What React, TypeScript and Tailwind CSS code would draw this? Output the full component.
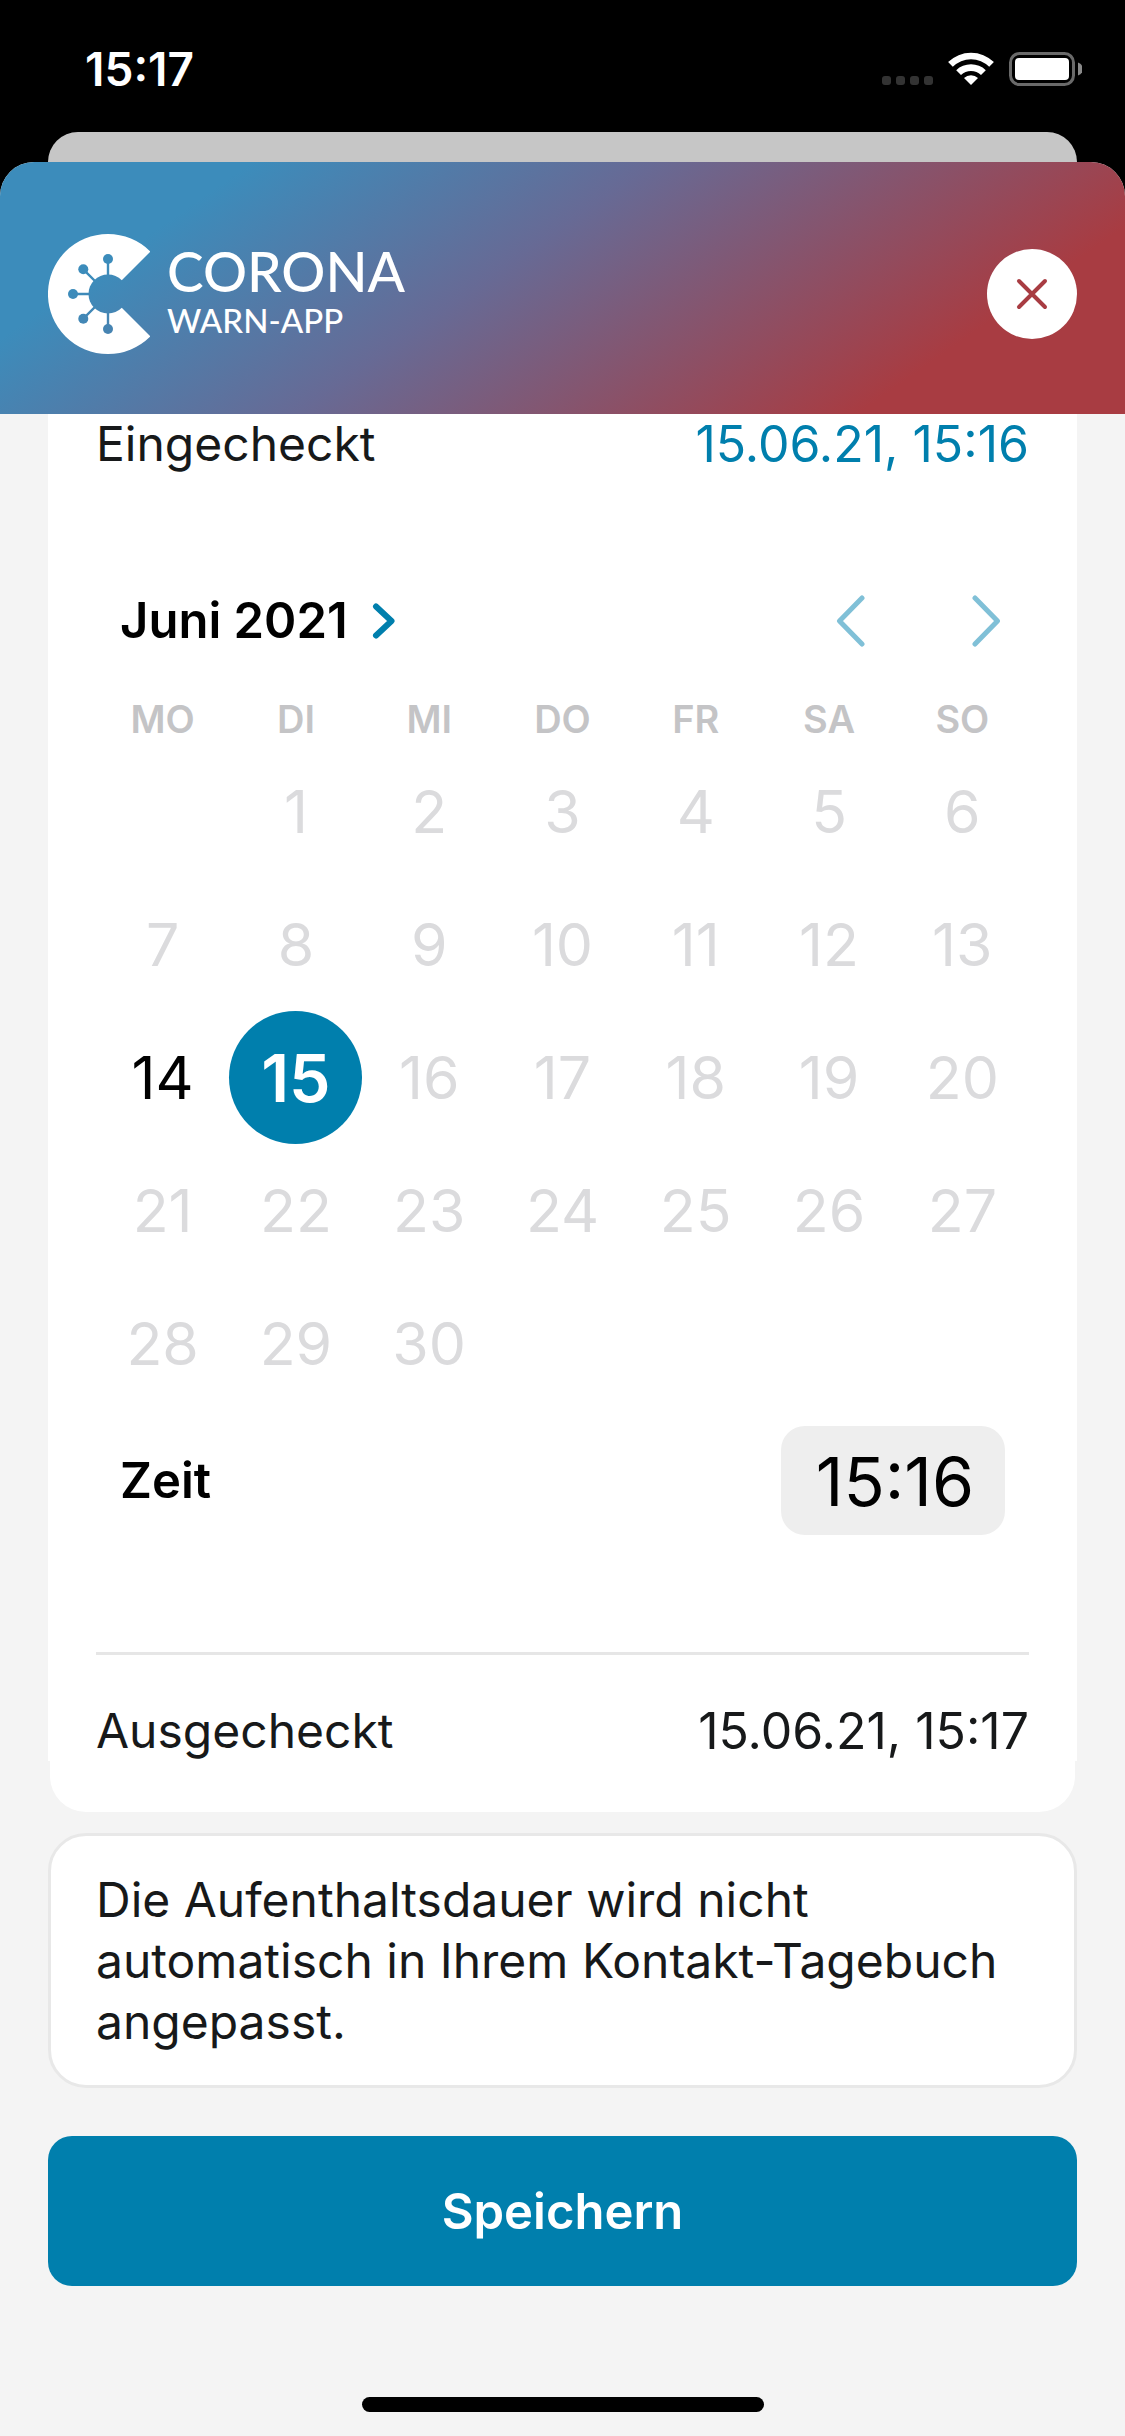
import { useState } from "react";

const WEEKDAYS = ["MO", "DI", "MI", "DO", "FR", "SA", "SO"];
const DAYS = Array.from({ length: 30 }, (_, i) => i + 1);
const ENABLED_DAYS = [14, 15];

function StatusBar() {
  return (
    <div className="flex h-[132px] items-start justify-between pt-[39px] pr-[43px] pl-[85px] text-white">
      <time className="text-[46px] leading-[60px] font-semibold">15:17</time>
      <svg width="200" height="34" viewBox="0 0 200 34" className="mt-[13px]" aria-hidden="true">
        <g fill="#333333">
          <rect x="0" y="24" width="9" height="9" rx="3" />
          <rect x="14" y="24" width="9" height="9" rx="3" />
          <rect x="28" y="24" width="9" height="9" rx="3" />
          <rect x="42" y="24" width="9" height="9" rx="3" />
        </g>
        <g transform="translate(89 33)" fill="white">
          <path d="M0 0L-7 -7A10.5 10.5 0 0 1 7 -7Z" />
          <path d="M-14.8 -14.8A21.5 21.5 0 0 1 14.8 -14.8L10 -10A14.5 14.5 0 0 0 -10 -10Z" />
          <path d="M-22.9 -22.9A32.8 32.8 0 0 1 22.9 -22.9L18.2 -18.2A25.6 25.6 0 0 0 -18.2 -18.2Z" />
        </g>
        <rect x="128.5" y="1.5" width="63" height="31" rx="9" fill="none" stroke="#6a6a6a" strokeWidth="3" />
        <rect x="133" y="6" width="54" height="22" rx="4" fill="white" />
        <path d="M196 10.5A6.8 6.8 0 0 1 196 23.5Z" fill="#8a8a8a" />
      </svg>
    </div>
  );
}

function Logo() {
  return (
    <div className="flex items-center gap-[17px] text-white">
      <svg width="102" height="120" viewBox="0 0 102 120" aria-hidden="true">
        <mask id="virus" maskUnits="userSpaceOnUse" x="0" y="0" width="120" height="120">
          <rect width="120" height="120" fill="white" />
          <circle cx="60" cy="60" r="19.5" fill="black" />
          <g stroke="black" strokeWidth="2.4">
            <path d="M60 60V25M60 60V95M60 60H25M60 60L35.3 35.3M60 60L35.3 84.7" />
          </g>
          <g fill="black">
            <circle cx="60" cy="25" r="5" />
            <circle cx="60" cy="95" r="5" />
            <circle cx="25" cy="60" r="5" />
            <circle cx="35.3" cy="35.3" r="5" />
            <circle cx="35.3" cy="84.7" r="5" />
          </g>
        </mask>
        <path d="M60 60L102.4 17.6A60 60 0 1 0 102.4 102.4Z" fill="white" mask="url(#virus)" />
      </svg>
      <div className="flex flex-col pb-1 font-['Lato','Open_Sans',sans-serif] font-medium">
        <span className="text-[55px] leading-[56px]">CORONA</span>
        <span className="text-[33px] leading-[42px]">WARN-APP</span>
      </div>
    </div>
  );
}

function Chevron({ left = false }: { left?: boolean }) {
  return (
    <svg width="30" height="52" viewBox="0 0 30 52" fill="none" stroke="#80c0d7" strokeWidth="5" strokeLinecap="round" strokeLinejoin="round" aria-hidden="true">
      <path d={left ? "M26 3L3.5 26L26 49" : "M4 3L26.5 26L4 49"} />
    </svg>
  );
}

export default function App() {
  const [day, setDay] = useState(15);
  const [time, setTime] = useState("15:16");

  return (
    <div className="flex min-h-screen flex-col bg-black font-['Inter','Liberation_Sans',sans-serif] text-[48px] leading-[60px] text-[#17191a]">
      <StatusBar />
      <div className="mx-12 h-[30px] rounded-t-[30px] bg-[#c6c6c6]" />

      <div className="flex flex-1 flex-col overflow-hidden rounded-t-[34px] bg-[#f4f4f4]">
        <header className="flex h-[252px] items-center justify-between bg-[linear-gradient(145deg,#3c8cbb_17%,#676a95_44%,#a83c42_82%)] px-12 pt-3">
          <Logo />
          <button type="button" aria-label="Schließen" className="flex size-[90px] items-center justify-center rounded-full bg-white">
            <svg width="32" height="32" viewBox="0 0 32 32" stroke="#a83c42" strokeWidth="4" strokeLinecap="round" aria-hidden="true">
              <path d="M3 3L29 29M29 3L3 29" />
            </svg>
          </button>
        </header>

        <main className="flex flex-1 flex-col px-12">
          <section className="bg-white px-12">
            <div className="flex h-[60px] items-center justify-between">
              <span>Eingecheckt</span>
              <span className="text-[50px] text-[#007fad]">15.06.21, 15:16</span>
            </div>

            <div className="mt-[117px] flex items-center justify-between pr-7 pl-6">
              <button type="button" className="flex items-center gap-6 text-[49px] font-semibold text-black">
                Juni 2021
                <svg width="24" height="36" viewBox="0 0 24 36" fill="none" stroke="#007fad" strokeWidth="6" strokeLinecap="round" strokeLinejoin="round" aria-hidden="true">
                  <path d="M4 3.5L19.5 18L4 32.5" />
                </svg>
              </button>
              <div className="flex gap-[105px]">
                <button type="button" aria-label="Voriger Monat"><Chevron left /></button>
                <button type="button" aria-label="Nächster Monat"><Chevron /></button>
              </div>
            </div>

            <div className="mt-11 grid grid-cols-7 text-center text-[38px] leading-[48px] font-semibold text-[#c4c4c6]">
              {WEEKDAYS.map((name) => (
                <span key={name}>{name}</span>
              ))}
            </div>

            <div className="mt-0.5 grid auto-rows-[133px] grid-cols-7 place-items-center">
              {DAYS.map((d) => (
                <button
                  key={d}
                  type="button"
                  disabled={!ENABLED_DAYS.includes(d)}
                  onClick={() => setDay(d)}
                  className={
                    (d === 1 ? "col-start-2 " : "") +
                    (d === day
                      ? "size-[133px] rounded-full bg-[#007fad] text-[66px] font-semibold text-white"
                      : "size-[133px] rounded-full text-[59px] text-black disabled:text-[#dbdbdd]")
                  }
                >
                  {d}
                </button>
              ))}
            </div>

            <div className="mt-4 flex items-center justify-between px-6 text-black">
              <label htmlFor="zeit" className="text-[49px] font-semibold">Zeit</label>
              <input
                id="zeit"
                type="text"
                value={time}
                onChange={(e) => setTime(e.target.value)}
                className="h-[109px] w-[224px] rounded-3xl bg-[#eeeeee] pl-1 text-center text-[68px]"
              />
            </div>

            <hr className="mt-[117px] border-t-[3px] border-[#e6e6e6]" />
            <div className="flex h-[106px] items-end justify-between">
              <span>Ausgecheckt</span>
              <span className="text-[50px]">15.06.21, 15:17</span>
            </div>
          </section>
          <div className="mx-0.5 h-[51px] rounded-b-[36px] bg-white" />

          <p className="mt-[21px] rounded-[38px] border-[3px] border-[#e8e8e8] bg-white px-[45px] py-[33px] leading-[61px]">
            Die Aufenthaltsdauer wird nicht automatisch in Ihrem Kontakt-Tagebuch angepasst.
          </p>

          <button type="button" className="mt-12 h-[150px] rounded-3xl bg-[#007fad] pt-0.5 text-[49px] font-semibold text-white">
            Speichern
          </button>

          <div className="mt-auto mb-6 h-[15px] w-[402px] self-center rounded-full bg-black" />
        </main>
      </div>
    </div>
  );
}
